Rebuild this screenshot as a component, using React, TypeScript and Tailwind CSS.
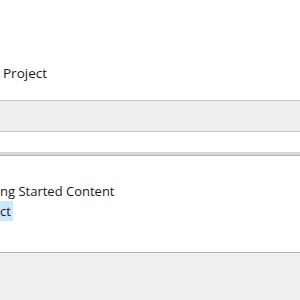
import React from 'react';

export default function App() {
  return (
    <div className="w-[300px] h-[300px] overflow-hidden bg-white text-[#1a1a1a]" style={{ fontFamily: '"Open Sans", "Noto Sans", sans-serif' }}>
      <div className="h-[100px] flex items-end pb-[18px] pl-[3px]">
        <span className="text-[13.5px] leading-[18px]">Project</span>
      </div>
      <div className="h-[32px] bg-[#efefef] border-y border-[#c4c4c4]" />
      <div className="h-[20px]" />
      <div className="h-[3px] bg-[#d6d6d6]" />
      <div className="h-px bg-[#b4b4b4]" />
      <div className="h-[96px] flex flex-col pt-[26px] text-[13px] leading-[19px]">
        <span>ng Started Content</span>
        <span className="self-start bg-[#cce8ff] pr-[2px] leading-[20px]">ct</span>
      </div>
      <div className="h-[48px] bg-[#f0f0f0] border-t border-[#b4b4b4]" />
    </div>
  );
}
